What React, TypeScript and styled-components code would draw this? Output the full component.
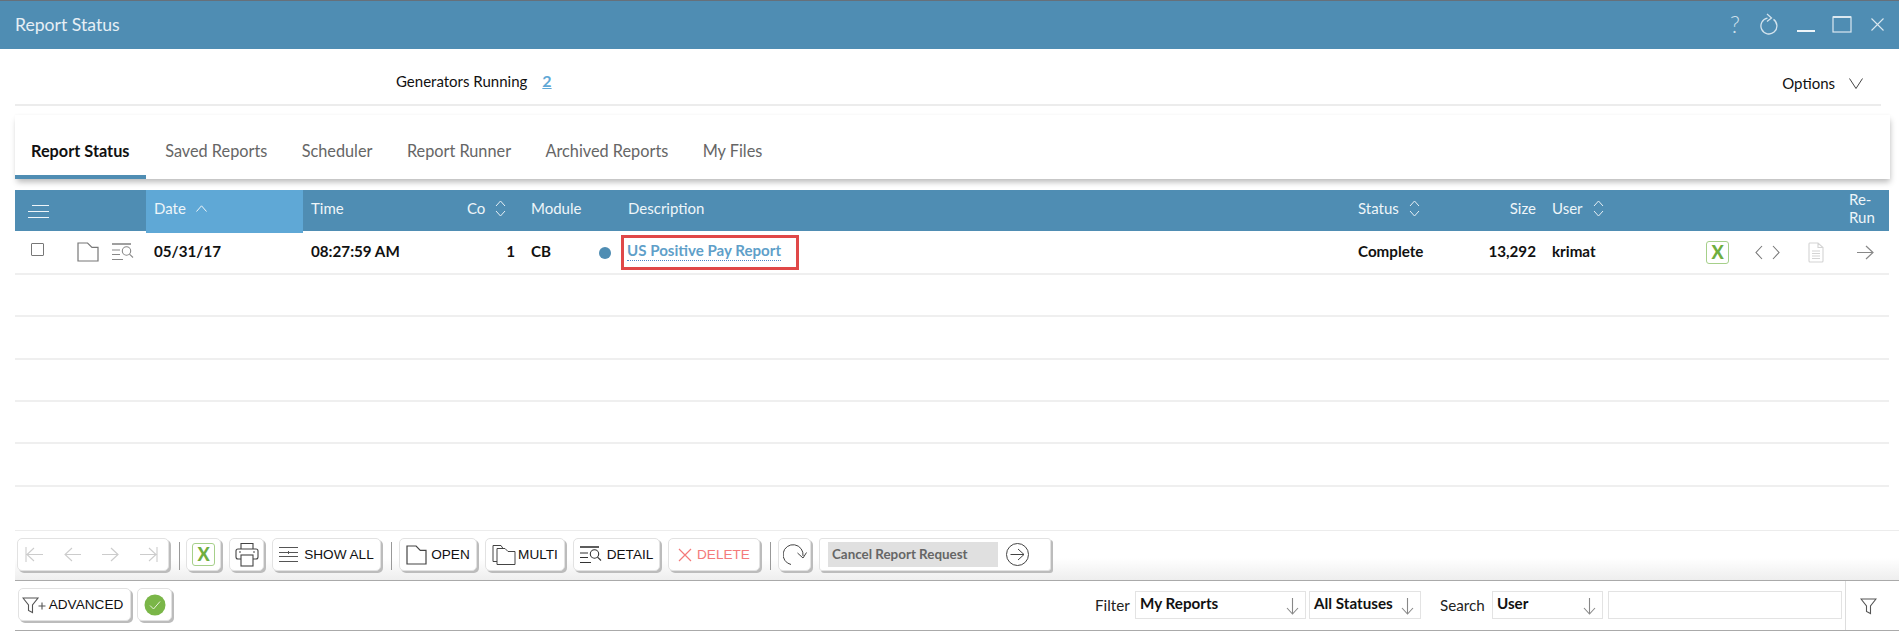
import React from "react";
import styled, { createGlobalStyle } from "styled-components";

const Global = createGlobalStyle`
  html, body { margin: 0; padding: 0; background: #fff; }
  body { font-family: Lato, "Liberation Sans", sans-serif; color: #111; overflow: hidden; }
  * { box-sizing: border-box; }
`;

const BLUE = "#4f8db3";
const COLS = "131px 157px 156px 64px 97px 730px 130px 64px 146px 55px 45px 51px 48px";

const Window = styled.div`
  width: 1899px; height: 635px; display: flex; flex-direction: column; padding-bottom: 4px; background: #fff;
`;
const TitleBar = styled.header`
  height: 49px; flex: none; background: ${BLUE}; border-top: 1px solid #66707a;
  display: flex; align-items: center; justify-content: space-between; padding: 0 15px 2px 15px;
`;
const Title = styled.h1`
  margin: 0; font-size: 17.6px; font-weight: 400; color: #e6eff5;
`;
const WinIcons = styled.div`
  display: flex; align-items: center; gap: 17px; color: #dbe8f0;
`;
const Help = styled.span`
  font-size: 23px; font-weight: 300; color: #cfe0eb; width: 24px; text-align: center; margin-right: -6px;
`;
const CloseWrap = styled.span`
  margin-left: 2px; display: flex;
`;
const TopRow = styled.div`
  height: 57px; flex: none; margin: 0 18px 0 15px; border-bottom: 2px solid #ececec;
  display: flex; align-items: center; justify-content: space-between; padding: 8px 18px 0 381px;
`;
const Generators = styled.div`
  font-size: 15px; display: flex; gap: 15px; align-items: center;
`;
const CountLink = styled.a`
  color: #5fa8d6; font-weight: 700; text-decoration: underline; font-size: 16px;
`;
const Options = styled.div`
  display: flex; align-items: center; gap: 14px; font-size: 15px; padding-top: 5px;
`;
const TabsPanel = styled.nav`
  height: 64px; flex: none; margin: 9px 9px 0 15px; display: flex; align-items: stretch; padding-top: 24px;
  background: #fff; box-shadow: 1px 4px 6px -1px rgba(0,0,0,.28), 0 -1px 2px rgba(0,0,0,.02);
`;
const Tab = styled.div<{ $active?: boolean }>`
  padding: 2px ${p => (p.$active ? "16.5px" : "17.2px")} 0 ${p => (p.$active ? "16px" : "17.2px")};
  margin-right: ${p => (p.$active ? "2px" : "0")};
  font-size: 16.3px; font-weight: ${p => (p.$active ? 700 : 400)};
  color: ${p => (p.$active ? "#111" : "#666")};
  display: flex; align-items: flex-start;
  border-bottom: 4px solid ${p => (p.$active ? BLUE : "transparent")};
`;
const Table = styled.section`
  margin: 11px 10px 0 15px; flex: none;
`;
const HeadRow = styled.div`
  display: grid; grid-template-columns: ${COLS}; height: 41px; margin-bottom: 1.5px; background: ${BLUE}; color: #eef5f9; font-size: 15px;
`;
const HeadCell = styled.div<{ $active?: boolean; $right?: boolean; $wrap?: boolean }>`
  display: flex; align-items: center; gap: 10px; padding: 0 8px 7px;
  justify-content: ${p => (p.$right ? "flex-end" : "flex-start")};
  background: ${p => (p.$active ? "#5fa8d6" : "transparent")};
  line-height: ${p => (p.$wrap ? "18px" : "normal")};
`;
const MenuCell = styled(HeadCell)`
  padding: 0 0 2px 13px;
`;
const Row = styled.div`
  display: grid; grid-template-columns: ${COLS}; grid-auto-rows: 36px; height: 42.4px; border-bottom: 2px solid #efefef;
  font-size: 15.2px; font-weight: 700; color: #111; align-items: center;
`;
const Cell = styled.div<{ $right?: boolean; $center?: boolean }>`
  padding: 0 8px; display: flex; align-items: center;
  justify-content: ${p => (p.$right ? "flex-end" : p.$center ? "center" : "flex-start")};
`;
const IconCell = styled(Cell)`
  margin-top: 4px;
`;
const SelectCell = styled.div`
  display: flex; align-items: center; padding-left: 16px;
`;
const CheckBox = styled.span`
  width: 13px; height: 13px; border: 1.5px solid #777; border-radius: 1px; margin-right: 33px; margin-top: -2px;
`;
const IconGroup = styled.span`
  display: flex; align-items: center; gap: 13px; margin-top: 2px;
`;
const ModuleCell = styled.div`
  display: flex; align-items: center;
`;
const Dot = styled.span`
  width: 12px; height: 12px; border-radius: 50%; background: ${BLUE}; margin: 5px 0 0 40px;
`;
const LinkCell = styled.div`
  display: flex; align-items: center;
`;
const Highlight = styled.div`
  height: 35px; width: 178px; margin: 4px 0 0 1px; border: 3px solid #e04848; padding: 0 0 0 3px;
  display: flex; align-items: flex-start;
`;
const ReportLink = styled.a`
  color: #5f9fc9; font-weight: 700; font-size: 15.1px; line-height: 19px; padding-top: 3px;
  border-bottom: 1.5px dotted #4a86c8;
`;
const ExcelBadge = styled.span`
  width: 23px; height: 23px; border: 1.5px solid #a6d08a; border-radius: 3px; color: #6fae3f;
  font: 900 18px/20px Lato, sans-serif; text-align: center; display: inline-block;
`;
const Toolbar = styled.div`
  margin: auto 0 0 15px; height: 51px; flex: none; padding: 7px 0 0 2px; display: flex; gap: 8px;
  border-top: 1px solid #ececec; border-bottom: 1px solid #aaa; background: linear-gradient(#fff 55%, #eeeeee);
`;
const Button = styled.button<{ $w: number; $danger?: boolean; $gap?: number }>`
  width: ${p => p.$w}px; height: 33px; flex: none; display: flex; align-items: center; justify-content: center; gap: ${p => p.$gap ?? 5}px;
  padding: 0; background: #fff; border: 1px solid #e2e2e2; border-radius: 5px; box-shadow: 2px 2px 0 #bcbcbc;
  font: 13.6px "Liberation Sans", sans-serif; color: ${p => (p.$danger ? "#f47a7a" : "#111")};
`;
const Pager = styled(Button)`
  justify-content: space-between; padding: 0 10px 0 7px; gap: 0;
`;
const AdvancedButton = styled(Button)`
  padding-right: 4px;
`;
const Sep = styled.span<{ $tight?: boolean }>`
  width: 1px; height: 28px; background: #999; margin: 4px ${p => (p.$tight ? "-1px" : "-2px")} 0 2px; flex: none;
`;
const CancelBox = styled.div`
  width: 232px; height: 33px; flex: none; display: flex; align-items: center; gap: 8px; padding: 0 0 0 8px;
  background: #fff; border: 1px solid #e2e2e2; border-radius: 3px; box-shadow: 2px 2px 0 #bcbcbc;
`;
const CancelField = styled.div`
  width: 170px; height: 25px; background: #e0e0e0; color: #666; font-size: 13.4px; font-weight: 700;
  padding: 3.5px 0 0 4px;
`;
const Footer = styled.div`
  margin-left: 15px; height: 50px; flex: none; display: flex; align-items: stretch; border-bottom: 1px solid #aaa;
`;
const FooterLeft = styled.div`
  display: flex; gap: 6px; padding: 7px 0 0 3px;
`;
const FilterGroup = styled.div`
  margin-left: auto; display: flex; align-items: center; font-size: 15.2px; color: #222; padding-bottom: 1px;
`;
const FilterLabel = styled.span<{ $w: number }>`
  width: ${p => p.$w}px; flex: none;
`;
const Select = styled.div<{ $w: number; $gapRight: number }>`
  width: ${p => p.$w}px; margin-right: ${p => p.$gapRight}px; height: 28px; border: 1px solid #e3e3e3; flex: none;
  display: flex; align-items: center; justify-content: space-between; padding: 0 6px 0 4px;
  font-size: 15.2px; font-weight: 700; color: #111;
  span { margin-top: -4px; }
  svg { margin-top: 3px; }
`;
const SearchInput = styled.div`
  width: 234px; height: 28px; border: 1px solid #e3e3e3; flex: none;
`;
const FilterToggle = styled.div`
  width: 54px; margin-left: 3px; padding-right: 9px; border-left: 1px solid #ddd; flex: none; display: flex; align-items: center; justify-content: center;
`;

const Svg = ({ w, h, children, stroke = "currentColor", sw = 1.2 }: { w: number; h: number; children: React.ReactNode; stroke?: string; sw?: number }) => (
  <svg width={w} height={h} viewBox={`0 0 ${w} ${h}`} fill="none" stroke={stroke} strokeWidth={sw} style={{ flex: "none", display: "block" }}>
    {children}
  </svg>
);

const Refresh = () => (
  <Svg w={22} h={22} stroke="#d3e3ed" sw={1.3}>
    <path d="M15.5 6.4 A8 8 0 1 1 9.5 5.1" />
    <path d="M9 1 L13.5 5 L9 8.5" />
  </Svg>
);
const Folder = ({ c = "#666", w = 24, h = 20 }: { c?: string; w?: number; h?: number }) => (
  <Svg w={w} h={h} stroke={c} sw={1.2}>
    <path d={`M1 1 H${w * 0.48} L${w * 0.68} ${h * 0.27} H${w - 1} V${h - 1} H1 Z`} />
  </Svg>
);
const DetailIcon = ({ c = "#888" }: { c?: string }) => (
  <Svg w={22} h={18} stroke={c} sw={1.1}>
    <path d="M0 1 H19" strokeWidth={1.6} />
    <path d="M0 7 H8 M0 11.5 H8 M0 16.5 H11" />
    <circle cx="14.5" cy="8" r="4.2" />
    <path d="M17.5 11.2 L21 14.5" />
  </Svg>
);
const Sort = () => (
  <Svg w={11} h={17} stroke="#e6eff5" sw={1}>
    <path d="M1 6 L5.5 1 L10 6 M1 11 L5.5 16 L10 11" />
  </Svg>
);
const ArrowRight = ({ c = "#888", w = 17 }: { c?: string; w?: number }) => (
  <Svg w={w} h={15} stroke={c} sw={1.2}>
    <path d={`M0 7.5 H${w - 1} M${w - 8} 1 L${w - 1} 7.5 L${w - 8} 14`} />
  </Svg>
);
const ArrowLeft = ({ c = "#ccc", w = 17 }: { c?: string; w?: number }) => (
  <Svg w={w} h={15} stroke={c} sw={1.1}>
    <path d={`M${w} 7.5 H1 M8 1 L1 7.5 L8 14`} />
  </Svg>
);
const Down = () => (
  <Svg w={13} h={17} stroke="#888" sw={1.1}>
    <path d="M6.5 0 V16 M1 10 L6.5 16 L12 10" />
  </Svg>
);
const FunnelIcon = ({ plus }: { plus?: boolean }) => (
  <Svg w={plus ? 24 : 17} h={18} stroke="#555" sw={1.1}>
    <path d="M1 2 H16 L10.5 9 V16.5 L6.5 14.5 V9 Z" />
    {plus && <path d="M16.5 10 H23.5 M20 6.5 V13.5" />}
  </Svg>
);

export default function App() {
  return (
    <Window>
      <Global />
      <TitleBar>
        <Title>Report Status</Title>
        <WinIcons>
          <Help>?</Help>
          <Refresh />
          <Svg w={18} h={22} stroke="#eef5f9" sw={2}>
            <path d="M0 18 H18" />
          </Svg>
          <Svg w={20} h={18} stroke="#dbe8f0" sw={1.2}>
            <rect x="1" y="2" width="18" height="15" />
            <path d="M1 2 H19" strokeWidth={2} />
          </Svg>
          <CloseWrap>
            <Svg w={13} h={13} stroke="#dbe8f0" sw={1.1}>
              <path d="M.5 .5 L12.5 12.5 M12.5 .5 L.5 12.5" />
            </Svg>
          </CloseWrap>
        </WinIcons>
      </TitleBar>

      <TopRow>
        <Generators>
          Generators Running <CountLink>2</CountLink>
        </Generators>
        <Options>
          Options
          <Svg w={14} h={11} stroke="#444" sw={1}>
            <path d="M.5 .5 L7 10.5 L13.5 .5" />
          </Svg>
        </Options>
      </TopRow>

      <TabsPanel>
        <Tab $active>Report Status</Tab>
        <Tab>Saved Reports</Tab>
        <Tab>Scheduler</Tab>
        <Tab>Report Runner</Tab>
        <Tab>Archived Reports</Tab>
        <Tab>My Files</Tab>
      </TabsPanel>

      <Table>
        <HeadRow>
          <MenuCell>
            <Svg w={21} h={16} stroke="#eef5f9" sw={1}>
              <path d="M4 2.5 H21 M0 8.5 H21 M0 14.5 H21" />
            </Svg>
          </MenuCell>
          <HeadCell $active>
            Date
            <Svg w={11} h={7} stroke="#eef5f9" sw={1}>
              <path d="M.5 6.5 L5.5 .8 L10.5 6.5" />
            </Svg>
          </HeadCell>
          <HeadCell>Time</HeadCell>
          <HeadCell>
            Co
            <Sort />
          </HeadCell>
          <HeadCell>Module</HeadCell>
          <HeadCell>Description</HeadCell>
          <HeadCell>
            Status
            <Sort />
          </HeadCell>
          <HeadCell $right>Size</HeadCell>
          <HeadCell>
            User
            <Sort />
          </HeadCell>
          <HeadCell />
          <HeadCell />
          <HeadCell />
          <HeadCell $wrap>
            Re-
            <br />
            Run
          </HeadCell>
        </HeadRow>

        <Row>
          <SelectCell>
            <CheckBox />
            <IconGroup>
              <Folder c="#777" w={22} h={20} />
              <DetailIcon />
            </IconGroup>
          </SelectCell>
          <Cell>05/31/17</Cell>
          <Cell>08:27:59 AM</Cell>
          <Cell $right>1</Cell>
          <ModuleCell>
            <Cell>CB</Cell>
            <Dot />
          </ModuleCell>
          <LinkCell>
            <Highlight>
              <ReportLink>US Positive Pay Report</ReportLink>
            </Highlight>
          </LinkCell>
          <Cell>Complete</Cell>
          <Cell $right>13,292</Cell>
          <Cell>krimat</Cell>
          <IconCell $center>
            <ExcelBadge>X</ExcelBadge>
          </IconCell>
          <IconCell $center>
            <Svg w={25} h={15} stroke="#777" sw={1.1}>
              <path d="M7 1 L1 7.5 L7 14 M18 1 L24 7.5 L18 14" />
            </Svg>
          </IconCell>
          <IconCell $center>
            <Svg w={16} h={21} stroke="#d4d4d4" sw={1.1}>
              <path d="M1.5 1 H10 L15 5.5 V19 Q15 20 14 20 H2 Q1 20 1 19 V2 Q1 1 1.5 1 Z M10 1 V5.5 H15" />
              <path d="M4 9 H12 M4 11.5 H12 M4 14 H12 M4 16.5 H12" />
            </Svg>
          </IconCell>
          <IconCell $center>
            <ArrowRight c="#888" />
          </IconCell>
        </Row>
        {[0, 1, 2, 3, 4].map(i => (
          <Row key={i} />
        ))}
      </Table>

      <Toolbar>
        <Pager $w={152} disabled>
          <Svg w={18} h={15} stroke="#ccc" sw={1.1}>
            <path d="M1 0 V15 M18 7.5 H2 M9 1 L2 7.5 L9 14" />
          </Svg>
          <ArrowLeft />
          <ArrowRight c="#ccc" />
          <Svg w={18} h={15} stroke="#ccc" sw={1.1}>
            <path d="M17 0 V15 M0 7.5 H16 M9 1 L16 7.5 L9 14" />
          </Svg>
        </Pager>
        <Sep />
        <Button $w={35}>
          <ExcelBadge>X</ExcelBadge>
        </Button>
        <Button $w={35}>
          <Svg w={24} h={25} stroke="#444" sw={1.1}>
            <path d="M6 7 V1.5 H18 V7" />
            <path d="M6 17 H3 Q1 17 1 15 V9 Q1 7 3 7 H21 Q23 7 23 9 V15 Q23 17 21 17 H18" />
            <rect x="6" y="13" width="12" height="11" />
            <path d="M4 10 H6 M18 10 H20" />
          </Svg>
        </Button>
        <Button $w={109} $gap={6}>
          <Svg w={19} h={15} stroke="#555" sw={1}>
            <path d="M0 .5 H19 M0 5.5 H19 M0 9.5 H19 M0 14.5 H19" />
            <path d="M9.5 4 V7" />
          </Svg>
          SHOW ALL
        </Button>
        <Sep $tight />
        <Button $w={78} $gap={4}>
          <Folder c="#444" w={21} h={20} />
          OPEN
        </Button>
        <Button $w={80} $gap={2}>
          <Svg w={24} h={21} stroke="#444" sw={1}>
            <path d="M5 17.5 H1 V1.5 H9 L11 4.5" />
            <path d="M5 4.5 H13 L16 7.5 H23 V20.5 H5 Z" />
          </Svg>
          MULTI
        </Button>
        <Button $w={87}>
          <DetailIcon c="#333" />
          DETAIL
        </Button>
        <Button $w={92} $danger>
          <Svg w={14} h={14} stroke="#f47a7a" sw={1.2}>
            <path d="M1 1 L13 13 M13 1 L1 13" />
          </Svg>
          DELETE
        </Button>
        <Sep $tight />
        <Button $w={33}>
          <Svg w={24} h={24} stroke="#444" sw={1}>
            <path d="M8 21.5 A10 10 0 1 1 20 13" />
            <path d="M14.5 10 L20 15 L23.5 9.5" />
          </Svg>
        </Button>
        <CancelBox>
          <CancelField>Cancel Report Request</CancelField>
          <Svg w={23} h={23} stroke="#444" sw={1}>
            <circle cx="11.5" cy="11.5" r="11" />
            <path d="M4.5 11.5 H18 M12 6 L18 11.5 L12 17" />
          </Svg>
        </CancelBox>
      </Toolbar>

      <Footer>
        <FooterLeft>
          <AdvancedButton $w={113} $gap={3}>
            <FunnelIcon plus />
            ADVANCED
          </AdvancedButton>
          <Button $w={35}>
            <Svg w={22} h={22} stroke="#e8f3dd" sw={1}>
              <circle cx="11" cy="11" r="10.5" fill="#7ab648" stroke="none" />
              <path d="M6 11.5 L9.5 15 L16 7.5" />
            </Svg>
          </Button>
        </FooterLeft>
        <FilterGroup>
          <FilterLabel $w={40}>Filter</FilterLabel>
          <Select $w={171} $gapRight={3}>
            <span>My Reports</span>
            <Down />
          </Select>
          <Select $w={112} $gapRight={19}>
            <span>All Statuses</span>
            <Down />
          </Select>
          <FilterLabel $w={52}>Search</FilterLabel>
          <Select $w={111} $gapRight={5}>
            <span>User</span>
            <Down />
          </Select>
          <SearchInput />
        </FilterGroup>
        <FilterToggle>
          <FunnelIcon />
        </FilterToggle>
      </Footer>
    </Window>
  );
}
